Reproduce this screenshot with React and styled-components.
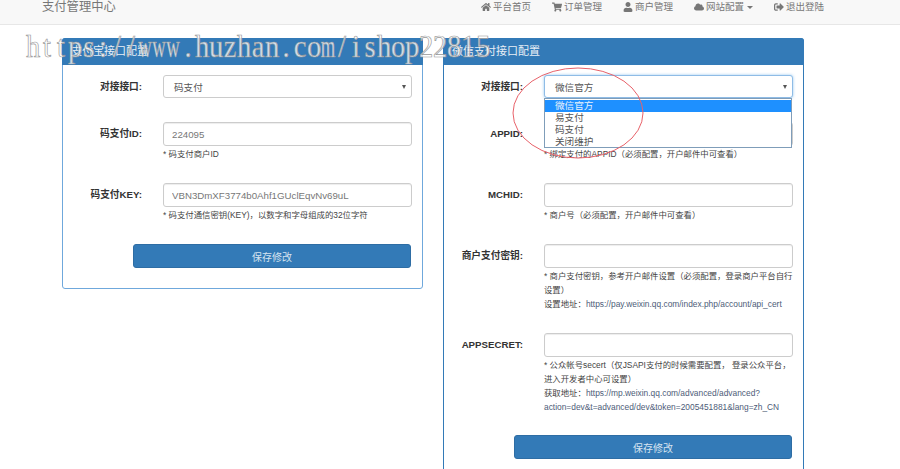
import styled, { createGlobalStyle } from "styled-components";
import { FaHome, FaShoppingCart, FaUser, FaCloud, FaSignOutAlt } from "react-icons/fa";

const GlobalStyle = createGlobalStyle`
	html, body {
		margin: 0;
		height: 469px;
		overflow: hidden;
		background: #fff;
		font-family: "Liberation Sans", "Noto Sans CJK SC", sans-serif;
		color: #333;
	}
	* {
		box-sizing: border-box;
	}
`;

const Page = styled.div`
	position: relative;
	width: 900px;
	height: 469px;
	overflow: hidden;
`;

const Navbar = styled.nav`
	display: flex;
	justify-content: space-between;
	height: 25px;
	padding: 0 76px 0 42px;
	background: #f8f8f8;
	border-bottom: 1px solid #e7e7e7;
	color: #777;
`;

const Brand = styled.div`
	font-size: 12.3px;
	line-height: 14px;
`;

const NavList = styled.div`
	display: flex;
	gap: 21px;
`;

const NavItem = styled.div`
	display: flex;
	align-items: flex-start;
	gap: 2px;
	font-size: 9.5px;
	line-height: 14px;

	svg {
		margin-top: 2px;
		width: 10px;
		height: 10px;
	}
`;

const Caret = styled.span`
	align-self: flex-start;
	margin: 6px 0 0 1px;
	border-top: 3px solid #777;
	border-left: 3px solid transparent;
	border-right: 3px solid transparent;
`;

const Columns = styled.div`
	display: flex;
	align-items: flex-start;
	gap: 20px;
	padding: 13px 0 0 62px;
`;

const Panel = styled.section`
	width: 361px;
	flex: none;
	background: #fff;
	border: 1px solid ${props => props.$borderColor || "#337ab7"};
	border-radius: 3px;
`;

const PanelHeading = styled.h3`
	margin: -1px -1px 0;
	height: 27px;
	padding: 0 9px;
	background: #337ab7;
	border-radius: 3px 3px 0 0;
	color: #e8eff6;
	font-size: 11px;
	font-weight: normal;
	line-height: 27px;
`;

const PanelBody = styled.div`
	padding: 10px 0 20px;
`;

const Row = styled.div`
	display: flex;
	align-items: flex-start;
	margin-bottom: ${props => props.$gap || "22px"};
`;

const Label = styled.label`
	flex: none;
	width: 79px;
	margin-right: 21px;
	color: #333;
	font-size: 9.7px;
	font-weight: bold;
	line-height: 23px;
	text-align: right;
`;

const Field = styled.div`
	position: relative;
	width: 249px;
`;

const Input = styled.input`
	display: block;
	width: 100%;
	height: 24px;
	padding: 0 8px;
	background: #fff;
	border: 1px solid #ccc;
	border-radius: 3px;
	box-shadow: inset 0 1px 1px rgba(0, 0, 0, .075);
	color: #777;
	font-family: inherit;
	font-size: 9.7px;
`;

const SelectBox = styled.div`
	display: flex;
	align-items: center;
	justify-content: space-between;
	height: 23px;
	padding: 0 5px 0 10px;
	background: #fff;
	border: 1px solid ${props => (props.$open ? "#8fbce6" : "#ccc")};
	border-radius: 3px;
	box-shadow: ${props => (props.$open ? "0 0 3px rgba(102, 175, 233, .7)" : "none")};
	color: #555;
	font-size: 9.6px;
`;

const SelectArrow = styled.span`
	border-top: 4px solid #555;
	border-left: 2.5px solid transparent;
	border-right: 2.5px solid transparent;
`;

const OptionList = styled.div`
	position: absolute;
	z-index: 2;
	top: 23px;
	left: 0;
	width: 248px;
	height: 50px;
	padding-top: 1px;
	background: #fff;
	border: 1px solid #7f9db9;
	color: #555;
	font-size: 9.6px;
`;

const Option = styled.div`
	height: 12px;
	padding-left: 10px;
	background: ${props => (props.$active ? "#1e90ff" : "transparent")};
	color: ${props => (props.$active ? "#e8f2fc" : "#555")};
	line-height: 12px;
`;

const Help = styled.div`
	margin-top: 1px;
	color: #444;
	font-size: 8.4px;
	line-height: 14px;
`;

const LinkText = styled.span`
	color: #4d5c78;
`;

const SaveButton = styled.button`
	display: block;
	width: 278px;
	height: 24px;
	margin-left: 70px;
	background: #337ab7;
	border: 1px solid #2e6da4;
	border-radius: 3px;
	color: #d5e3f0;
	font-family: inherit;
	font-size: 10px;
`;

const Watermark = styled.div`
	position: absolute;
	z-index: 4;
	top: 30px;
	left: 26px;
	display: flex;
	font-family: "Liberation Serif", serif;
	font-size: 31px;
	line-height: 34px;
	color: rgba(255, 255, 255, .8);
	-webkit-text-stroke: .7px #999;
	pointer-events: none;
`;

const WatermarkChar = styled.span`
	display: flex;
	justify-content: center;
	width: 14.05px;
	transform: scaleX(${props => (props.$wide ? 0.6 : 0.92)});
`;

const Ellipse = styled.svg`
	position: absolute;
	z-index: 3;
	top: 64px;
	left: 508px;
	pointer-events: none;
`;

const navItems = [
	{ icon: <FaHome />, text: "平台首页" },
	{ icon: <FaShoppingCart />, text: "订单管理" },
	{ icon: <FaUser />, text: "商户管理" },
	{ icon: <FaCloud />, text: "网站配置", caret: true },
	{ icon: <FaSignOutAlt />, text: "退出登陆" },
];

const watermarkText = "https://www.huzhan.com/ishop22815";

export default function App() {
	return (
		<Page>
			<GlobalStyle />
			<Navbar>
				<Brand>支付管理中心</Brand>
				<NavList>
					{navItems.map(item => (
						<NavItem key={item.text}>
							{item.icon}
							{item.text}
							{item.caret && <Caret />}
						</NavItem>
					))}
				</NavList>
			</Navbar>

			<Columns>
				<Panel $borderColor="#6fa8dc">
					<PanelHeading>支付宝接口配置</PanelHeading>
					<PanelBody>
						<Row $gap="24px">
							<Label>对接接口:</Label>
							<Field>
								<SelectBox>
									码支付
									<SelectArrow />
								</SelectBox>
							</Field>
						</Row>
						<Row>
							<Label>码支付ID:</Label>
							<Field>
								<Input defaultValue="224095" />
								<Help>* 码支付商户ID</Help>
							</Field>
						</Row>
						<Row>
							<Label>码支付KEY:</Label>
							<Field>
								<Input defaultValue="VBN3DmXF3774b0Ahf1GUclEqvNv69uL" />
								<Help>* 码支付通信密钥(KEY)，以数字和字母组成的32位字符</Help>
							</Field>
						</Row>
						<SaveButton>保存修改</SaveButton>
					</PanelBody>
				</Panel>

				<Panel>
					<PanelHeading>微信支付接口配置</PanelHeading>
					<PanelBody>
						<Row $gap="24px">
							<Label>对接接口:</Label>
							<Field>
								<SelectBox $open>
									微信官方
									<SelectArrow />
								</SelectBox>
								<OptionList>
									<Option $active>微信官方</Option>
									<Option>易支付</Option>
									<Option>码支付</Option>
									<Option>关闭维护</Option>
								</OptionList>
							</Field>
						</Row>
						<Row>
							<Label>APPID:</Label>
							<Field>
								<Input />
								<Help>* 绑定支付的APPID（必须配置，开户邮件中可查看）</Help>
							</Field>
						</Row>
						<Row>
							<Label>MCHID:</Label>
							<Field>
								<Input />
								<Help>* 商户号（必须配置，开户邮件中可查看）</Help>
							</Field>
						</Row>
						<Row>
							<Label>商户支付密钥:</Label>
							<Field>
								<Input />
								<Help>
									* 商户支付密钥，参考开户邮件设置（必须配置，登录商户平台自行设置）
									<br />
									设置地址：<LinkText>https://pay.weixin.qq.com/index.php/account/api_cert</LinkText>
								</Help>
							</Field>
						</Row>
						<Row $gap="21px">
							<Label>APPSECRET:</Label>
							<Field>
								<Input />
								<Help>
									* 公众帐号secert（仅JSAPI支付的时候需要配置， 登录公众平台，进入开发者中心可设置）
									<br />
									获取地址：<LinkText>https://mp.weixin.qq.com/advanced/advanced?action=dev&amp;t=advanced/dev&amp;token=2005451881&amp;lang=zh_CN</LinkText>
								</Help>
							</Field>
						</Row>
						<SaveButton>保存修改</SaveButton>
					</PanelBody>
				</Panel>
			</Columns>

			<Ellipse width="140" height="100" viewBox="0 0 140 100">
				<ellipse cx="70" cy="49" rx="65" ry="45" fill="none" stroke="#e8626a" strokeWidth="1" />
			</Ellipse>

			<Watermark>
				{watermarkText.split("").map((ch, i) => (
					<WatermarkChar key={i} $wide={ch === "w" || ch === "m"}>{ch}</WatermarkChar>
				))}
			</Watermark>
		</Page>
	);
}
